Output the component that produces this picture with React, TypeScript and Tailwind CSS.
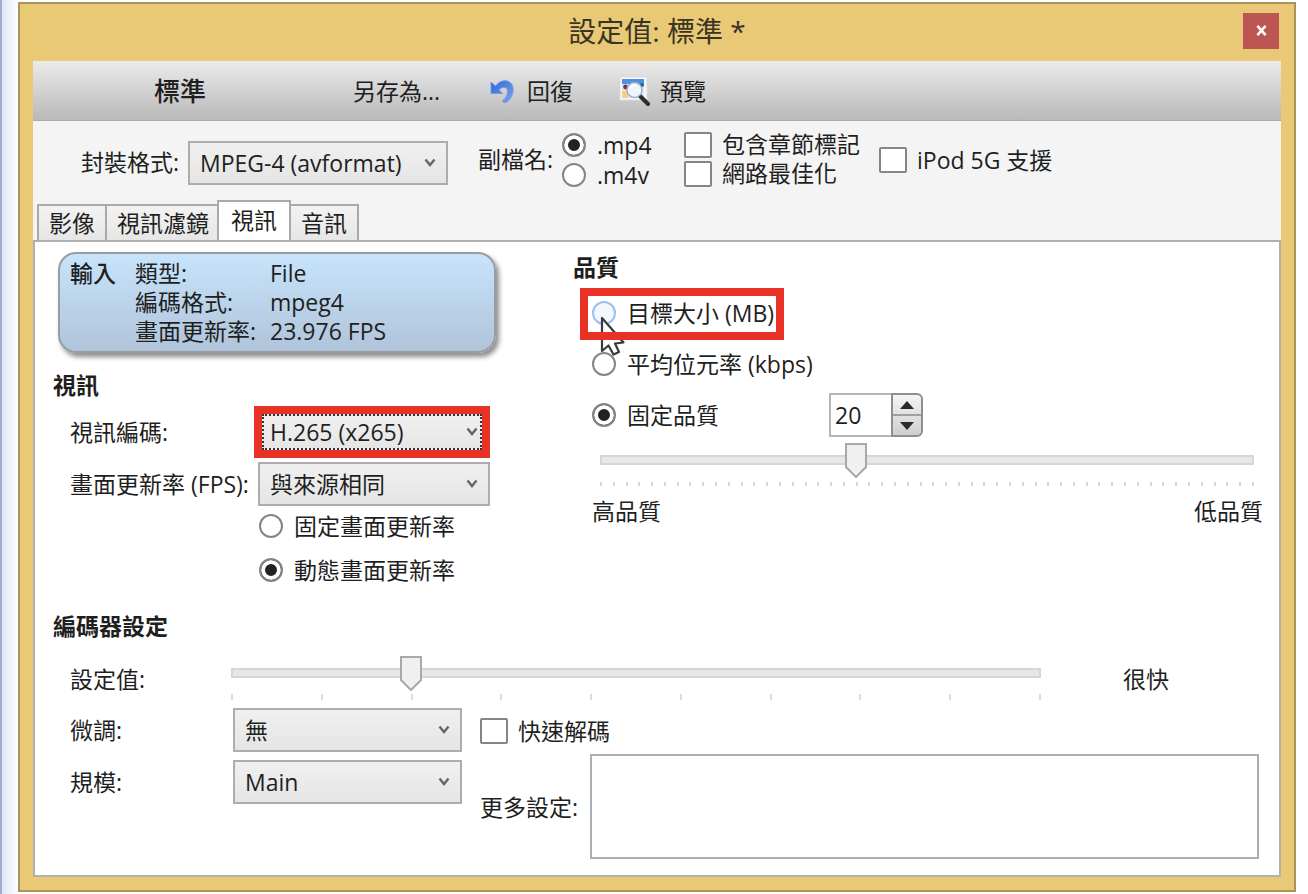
import { useState } from "react";
import type { ReactNode } from "react";

function Chevron({ tight = false }: { tight?: boolean }) {
  return (
    <svg
      viewBox="0 0 12 10"
      className={
        tight
          ? "pointer-events-none absolute right-1 top-1/2 h-[10px] w-3 -translate-y-1/2"
          : "pointer-events-none absolute right-[10px] top-1/2 h-[10px] w-3 -translate-y-1/2"
      }
      fill="none"
      stroke="#666"
      strokeWidth="2.4"
      aria-hidden="true"
    >
      <path d="M1.5 1.5 L6 7 L10.5 1.5" />
    </svg>
  );
}

function Combo({ id, value, focused = false }: { id: string; value: string; focused?: boolean }) {
  return (
    <div
      className={
        focused
          ? "relative h-[52px] w-full border-8 border-[#e83226]"
          : "relative h-11 w-full border-2 border-[#adadad]"
      }
    >
      <select
        id={id}
        defaultValue={value}
        className={
          focused
            ? "h-full w-full appearance-none border-2 border-dotted border-[#333] bg-linear-to-b from-[#f0f0f0] to-[#e6e6e6] pl-[6px] leading-7 outline-none"
            : "h-full w-full appearance-none bg-linear-to-b from-[#f0f0f0] to-[#e5e5e5] pl-[10px] leading-7 outline-none"
        }
      >
        <option>{value}</option>
      </select>
      <Chevron tight={focused} />
    </div>
  );
}

function Radio({
  name,
  label,
  checked = false,
  hot = false,
}: {
  name: string;
  label: string;
  checked?: boolean;
  hot?: boolean;
}) {
  return (
    <label className="flex items-center gap-[11px] whitespace-nowrap">
      <input
        type="radio"
        name={name}
        defaultChecked={checked}
        className={
          hot
            ? "size-6 shrink-0 appearance-none rounded-full border-2 border-[#9dbdf5] bg-[#f3f8ff] checked:bg-[#222] checked:shadow-[inset_0_0_0_4px_white]"
            : "size-6 shrink-0 appearance-none rounded-full border-2 border-[#858585] bg-white checked:bg-[#222] checked:shadow-[inset_0_0_0_4px_white]"
        }
      />
      <span>{label}</span>
    </label>
  );
}

function Check({ label }: { label: string }) {
  return (
    <label className="flex items-center gap-[10px] whitespace-nowrap">
      <input
        type="checkbox"
        className="h-[26px] w-7 shrink-0 appearance-none rounded-xs border-2 border-[#858585] bg-white checked:bg-[#555]"
      />
      <span>{label}</span>
    </label>
  );
}

function Slider({
  label,
  max,
  initial,
  dense = false,
}: {
  label: string;
  max: number;
  initial: number;
  dense?: boolean;
}) {
  const [value, setValue] = useState(initial);
  return (
    <div className="w-full">
      <div className="relative flex h-[34px] items-center">
        <input
          type="range"
          aria-label={label}
          min={0}
          max={max}
          value={value}
          onChange={(e) => setValue(Number(e.target.value))}
          className="h-[10px] w-full appearance-none border-2 border-[#d6d6d6] bg-[#e7e7e7] outline-none [&::-webkit-slider-thumb]:h-8 [&::-webkit-slider-thumb]:w-6 [&::-webkit-slider-thumb]:appearance-none [&::-webkit-slider-thumb]:bg-transparent"
        />
        <svg
          viewBox="0 0 24 36"
          className="pointer-events-none absolute -top-px h-9 w-6 -translate-x-1/2"
          style={{ left: `${(value / max) * 100}%` }}
          aria-hidden="true"
        >
          <path d="M2 2 H22 V25 L12 35 L2 25 Z" fill="#f0f0f0" stroke="#a9a9a9" strokeWidth="2" />
        </svg>
      </div>
      <div className={dense ? "mt-[5px] flex justify-between" : "mt-1 flex justify-between"}>
        {Array.from({ length: max + 1 }, (_, i) => (
          <span key={i} className={dense ? "h-1 w-[2px] bg-[#d6d6d6]" : "h-[6px] w-[2px] bg-[#dcdcdc]"} />
        ))}
      </div>
    </div>
  );
}

function UndoIcon() {
  return (
    <svg viewBox="0 0 26 26" className="size-[26px]" aria-hidden="true">
      <defs>
        <linearGradient id="undo" x1="0" y1="0" x2="1" y2="1">
          <stop offset="0" stopColor="#2f66d6" />
          <stop offset="1" stopColor="#7ea6ee" />
        </linearGradient>
      </defs>
      <path
        d="M2 4 L2 15.5 L13.5 15.5 L10 12 C12.5 8.8 18 8 18.6 12.5 C19 16.5 17 20 13.5 23 C14 25 17 25 18.5 23.5 C22.5 20 24.6 15 24 9.8 C22.8 1.6 12.5 0 6.5 8 Z"
        fill="url(#undo)"
        stroke="#6f98e6"
        strokeWidth="1"
        strokeLinejoin="round"
      />
    </svg>
  );
}

function PreviewIcon() {
  return (
    <svg viewBox="0 0 32 30" className="h-[30px] w-8" aria-hidden="true">
      <rect x="1" y="1" width="27" height="23" fill="#f8f8f8" stroke="#dcdcdc" />
      <rect x="3" y="3" width="22" height="19" fill="#d8e9fb" />
      <rect x="3" y="3" width="22" height="5" fill="#4a92e2" />
      <rect x="3" y="15" width="6" height="7" fill="#f3cf88" />
      <circle cx="6.5" cy="11" r="2.4" fill="#8e2a44" />
      <circle cx="23" cy="9" r="2" fill="#2459a8" />
      <path d="M21 20 L29 28" stroke="#2d2d2d" strokeWidth="4" strokeLinecap="round" />
      <circle cx="15.5" cy="14" r="7.5" fill="#eef6fd" fillOpacity="0.95" stroke="#a5b0bc" strokeWidth="1.4" />
      <path d="M11 13 C12 10 15 9 17 9.6" fill="none" stroke="#fff" strokeWidth="2" />
    </svg>
  );
}

function Pointer() {
  return (
    <svg
      viewBox="0 0 28 42"
      className="pointer-events-none absolute left-5 top-7 h-[42px] w-7"
      aria-hidden="true"
    >
      <path
        d="M2 2 V35 L8.5 29.5 L13.5 38.5 L19 36 L15 27.5 L23.5 26.5 Z"
        fill="#fff"
        stroke="#3a3a3a"
        strokeWidth="2.2"
        strokeLinejoin="round"
      />
    </svg>
  );
}

function Tab({ children, active = false }: { children: ReactNode; active?: boolean }) {
  return (
    <button
      type="button"
      role="tab"
      aria-selected={active}
      className={
        active
          ? "-mx-[2px] -mb-[2px] h-[42px] border-2 border-b-0 border-[#a9a9a9] bg-white px-3 pb-1"
          : "-mr-[2px] h-9 border-2 border-b-0 border-[#a9a9a9] bg-linear-to-b from-[#f3f3f3] to-[#e6e6e6] px-[10px]"
      }
    >
      {children}
    </button>
  );
}

export default function App() {
  const [quality, setQuality] = useState(20);
  return (
    <div className='flex min-h-screen bg-white font-["Open_Sans","Noto_Sans_CJK_TC",sans-serif] text-[23px] leading-7 text-[#1f1f1f]'>
      <div className="w-[18px] shrink-0 border-l-2 border-[#9badd0] bg-linear-to-r from-[#dfe7f4] to-white" />
      <main className="mb-[2px] mr-3 mt-[2px] flex flex-1 flex-col border-2 border-[#a8935a] bg-[#e9c976] px-[13px] pb-[13px]">
        <header className="grid h-[57px] shrink-0 grid-cols-[1fr_auto_1fr] items-center">
          <h1 className="col-start-2 pb-1 text-[28px] leading-9 text-[#3a3424]">設定值: 標準 *</h1>
          <button
            type="button"
            aria-label="Close"
            className="mb-1 mr-[2px] flex size-9 items-center justify-center justify-self-end bg-[#bc5653] text-white"
          >
            <svg viewBox="0 0 12 12" className="size-[11px]" stroke="#fff" strokeWidth="2.8" aria-hidden="true">
              <path d="M1.5 1 L10.5 11 M10.5 1 L1.5 11" />
            </svg>
          </button>
        </header>

        <div className="flex flex-1 flex-col bg-[#f4f4f4]">
          <div className="flex h-[60px] shrink-0 items-center border-b border-[#aaa] bg-linear-to-b from-[#ebebeb] to-[#b9b9b9]">
            <h2 className="w-[320px] pl-[121px] text-[26px] font-medium">標準</h2>
            <button type="button" className="w-[136px] text-left">
              另存為...
            </button>
            <button type="button" className="flex w-[130px] items-center gap-3">
              <UndoIcon />
              回復
            </button>
            <button type="button" className="flex items-center gap-[9px]">
              <PreviewIcon />
              預覽
            </button>
          </div>

          <div className="flex h-20 shrink-0 items-start pt-2">
            <label htmlFor="container" className="w-[155px] pl-12 pt-[19px]">
              封裝格式:
            </label>
            <div className="w-[260px] pt-3">
              <Combo id="container" value="MPEG-4 (avformat)" />
            </div>
            <fieldset className="ml-[30px] flex items-start">
              <span className="w-[84px] pt-4">副檔名:</span>
              <div className="w-[122px] pt-px leading-[30px]">
                <Radio name="ext" label=".mp4" checked />
                <Radio name="ext" label=".m4v" />
              </div>
            </fieldset>
            <div className="w-[195px] pt-px leading-[29px]">
              <Check label="包含章節標記" />
              <Check label="網路最佳化" />
            </div>
            <div className="pt-[17px]">
              <Check label="iPod 5G 支援" />
            </div>
          </div>

          <div role="tablist" className="flex h-[39px] shrink-0 items-end pl-1">
            <Tab>影像</Tab>
            <Tab>視訊濾鏡</Tab>
            <Tab active>視訊</Tab>
            <Tab>音訊</Tab>
          </div>

          <section className="flex-1 border-2 border-[#b0b0b0] bg-white">
            <div className="grid grid-cols-[538px_1fr]">
              <div className="pl-[18px]">
                <div className="ml-[5px] mt-[10px] flex h-[101px] w-[438px] rounded-[18px] border-2 border-[#999da3] bg-linear-to-b from-[#c7e4fb] to-[#b0c4da] pl-[10px] pt-[5px] leading-[29px] shadow-[3px_4px_5px_rgba(0,0,0,0.45)]">
                  <div className="w-[65px] font-medium">輸入</div>
                  <dl className="grid grid-cols-[135px_auto] content-start">
                    <dt>類型:</dt>
                    <dd>File</dd>
                    <dt>編碼格式:</dt>
                    <dd>mpeg4</dd>
                    <dt>畫面更新率:</dt>
                    <dd>23.976 FPS</dd>
                  </dl>
                </div>

                <h3 className="mt-[18px] font-bold">視訊</h3>
                <div className="mt-[7px] flex items-center pl-[17px]">
                  <label htmlFor="codec" className="w-[184px]">
                    視訊編碼:
                  </label>
                  <div className="w-[236px]">
                    <Combo id="codec" value="H.265 (x265)" focused />
                  </div>
                </div>
                <div className="mt-1 flex items-center pl-[17px]">
                  <label htmlFor="fps" className="w-[188px] whitespace-nowrap">
                    畫面更新率 (FPS):
                  </label>
                  <div className="w-[232px]">
                    <Combo id="fps" value="與來源相同" />
                  </div>
                </div>
                <div className="mt-[6px] flex flex-col gap-4 pl-[206px]">
                  <Radio name="rate" label="固定畫面更新率" />
                  <Radio name="rate" label="動態畫面更新率" checked />
                </div>
              </div>

              <div className="pr-4 pt-[11px]">
                <h3 className="font-bold">品質</h3>
                <div className="relative z-10 ml-[7px] mt-[7px] w-fit">
                  <div className="flex h-[52px] items-center pb-[3px] pl-3 pr-[10px]">
                    <Radio name="quality" label="目標大小 (MB)" hot />
                  </div>
                  <Pointer />
                  <div className="pointer-events-none absolute inset-0 border-8 border-[#e83226]" />
                </div>
                <div className="mt-[10px] pl-[19px]">
                  <Radio name="quality" label="平均位元率 (kbps)" />
                </div>
                <div className="mt-[15px] flex items-center pl-[19px]">
                  <div className="w-[237px]">
                    <Radio name="quality" label="固定品質" checked />
                  </div>
                  <div className="flex h-11 w-[94px]">
                    <input
                      type="text"
                      aria-label="固定品質"
                      value={quality}
                      onChange={(e) => setQuality(Number(e.target.value) || 0)}
                      className="w-[62px] border-2 border-r-0 border-[#b4b6bd] bg-white pl-1 outline-none"
                    />
                    <div className="flex flex-1 flex-col rounded-r-md border-2 border-[#8f8f8f] bg-linear-to-b from-[#f4f4f4] to-[#cfcfcf]">
                      <button
                        type="button"
                        aria-label="Up"
                        onClick={() => setQuality(quality + 1)}
                        className="flex flex-1 items-center justify-center border-b-2 border-[#a0a0a0]"
                      >
                        <svg viewBox="0 0 14 8" className="h-2 w-[14px]" aria-hidden="true">
                          <path d="M0 8 L7 0 L14 8 Z" fill="#2a2a2a" />
                        </svg>
                      </button>
                      <button
                        type="button"
                        aria-label="Down"
                        onClick={() => setQuality(quality - 1)}
                        className="flex flex-1 items-center justify-center"
                      >
                        <svg viewBox="0 0 14 8" className="h-2 w-[14px]" aria-hidden="true">
                          <path d="M0 0 L14 0 L7 8 Z" fill="#2a2a2a" />
                        </svg>
                      </button>
                    </div>
                  </div>
                </div>
                <div className="mt-[6px] pl-[27px] pr-[9px]">
                  <Slider label="品質" max={51} initial={20} dense />
                </div>
                <div className="mt-[11px] flex justify-between pl-[19px]">
                  <span>高品質</span>
                  <span>低品質</span>
                </div>
              </div>
            </div>

            <div className="pl-[18px] pr-5 pt-[28px]">
              <h3 className="font-bold">編碼器設定</h3>
              <div className="mt-4 flex items-start pl-[17px]">
                <span className="w-[161px] pt-[9px]">設定值:</span>
                <div className="flex-1">
                  <Slider label="設定值" max={9} initial={2} />
                </div>
                <span className="w-[218px] pl-[82px] pt-[9px]">很快</span>
              </div>
              <div className="mt-2 flex pl-[17px]">
                <div className="flex w-[392px] shrink-0 flex-col gap-2">
                  <div className="flex items-center">
                    <label htmlFor="tune" className="w-[163px]">
                      微調:
                    </label>
                    <div className="flex-1">
                      <Combo id="tune" value="無" />
                    </div>
                  </div>
                  <div className="flex items-center">
                    <label htmlFor="profile" className="w-[163px]">
                      規模:
                    </label>
                    <div className="flex-1">
                      <Combo id="profile" value="Main" />
                    </div>
                  </div>
                </div>
                <div className="flex flex-1 flex-col pl-[18px]">
                  <div className="flex h-[46px] items-center">
                    <Check label="快速解碼" />
                  </div>
                  <div className="flex items-center">
                    <label htmlFor="more" className="w-[110px]">
                      更多設定:
                    </label>
                    <textarea
                      id="more"
                      className="block h-[105px] flex-1 resize-none border-2 border-[#acaeb5] bg-white p-2 outline-none"
                    />
                  </div>
                </div>
              </div>
            </div>
          </section>
        </div>
      </main>
    </div>
  );
}
